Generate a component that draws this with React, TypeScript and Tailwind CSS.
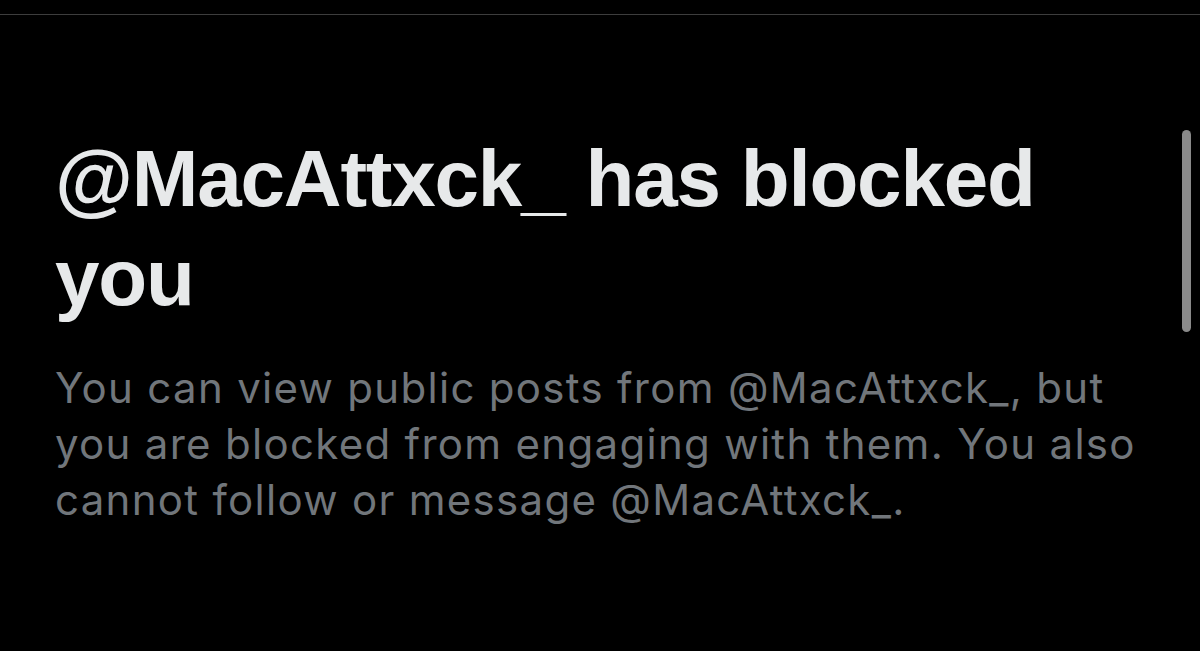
export default function App() {
  return (
    <div className="relative h-[651px] w-[1200px] overflow-hidden bg-black">
      <div className="h-[15px] border-b border-[#3d3d3d]" />

      <div className="pl-[55px] pr-[50px] pt-[114px]">
        <h1 className="text-[80px] font-bold leading-[99px] tracking-[-1.2px] text-[#e7e9ea] [font-family:'Liberation_Sans',Arial,sans-serif]">
          @MacAttxck_ has blocked you
        </h1>
        <p className="mt-[33px] text-[42px] leading-[56px] tracking-[1.3px] text-[#71767b] [font-family:Inter,'Noto_Sans',sans-serif]">
          You can view public posts from @MacAttxck_, but you are blocked from engaging with them. You also cannot follow or message @MacAttxck_.
        </p>
      </div>

      <div className="absolute left-[1182px] top-[130px] h-[202px] w-[9px] rounded-full bg-[#8a8a8a]" />
    </div>
  );
}
